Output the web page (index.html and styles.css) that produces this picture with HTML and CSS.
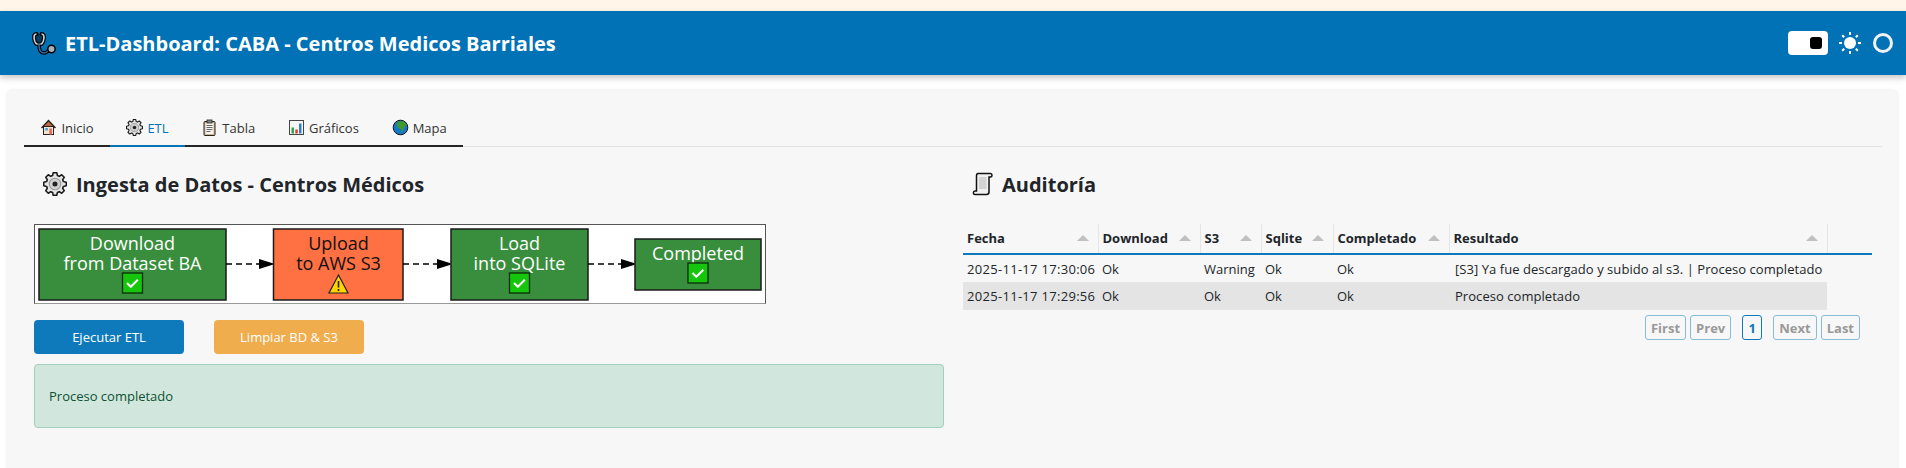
FILE: index.html
```html
<!DOCTYPE html>
<html lang="es">
<head>
<meta charset="utf-8">
<title>ETL-Dashboard</title>
<link rel="stylesheet" href="styles.css">
</head>
<body>
<svg class="defs" width="0" height="0" aria-hidden="true">
  <defs>
    <g id="gear">
      <path d="M7.990 2.980L8.510 .62H11.490L12.010 2.980 13.540 3.620 15.580 2.310 17.690 4.420 16.380 6.460 17.020 7.990 19.380 8.510V11.490L17.020 12.010 16.380 13.540 17.690 15.580 15.580 17.690 13.540 16.380 12.010 17.020 11.490 19.380H8.510L7.990 17.020 6.460 16.380 4.420 17.690 2.310 15.580 3.620 13.540 2.980 12.010 .62 11.490V8.510L2.980 7.990 3.620 6.460 2.310 4.420 4.420 2.310 6.460 3.620z" fill="#e6e6e6" stroke="#1a1a1a" stroke-width="1.300" stroke-linejoin="round"/>
      <circle cx="10" cy="10" r="4.800" fill="#d0d0d0" stroke="#9a9a9a" stroke-width="1"/>
      <circle cx="10" cy="10" r="2.100" fill="#222"/>
    </g>
    <g id="check">
      <rect x="-10" y="-10" width="20" height="20" fill="#16c60c" stroke="#0b2a0b" stroke-width="1.300"/>
      <path d="M-5.500 0l3.800 3.800 7-7" fill="none" stroke="#fff" stroke-width="2"/>
    </g>
  </defs>
</svg>

<div class="strip"></div>

<header class="topbar">
  <div class="brand">
    <svg class="brand-icon" viewBox="0 0 24 24" width="24" height="24">
      <path d="M4.500 3C2.300 3 1.800 5 2.100 7.500 2.500 11 4 13.500 7 13.500S11.500 11 11.900 7.500C12.200 5 11.700 3 9.500 3" fill="#0a3a5c" stroke="#000" stroke-width="4" stroke-linecap="round"/>
      <path d="M4.500 3C2.300 3 1.800 5 2.100 7.500 2.500 11 4 13.500 7 13.500S11.500 11 11.900 7.500C12.200 5 11.700 3 9.500 3" fill="none" stroke="#c4d6e4" stroke-width="1.600"/>
      <path d="M7 13.500c0 4.500 1.500 8.500 5 8.500s4.500-3 5.500-4" fill="none" stroke="#000" stroke-width="3.600"/>
      <path d="M7 13.500c0 4.500 1.500 8.500 5 8.500s4.500-3 5.500-4" fill="none" stroke="#2f6f9e" stroke-width="1.400"/>
      <circle cx="19.500" cy="18" r="3.700" fill="#a9b2b8" stroke="#000" stroke-width="1.500"/>
    </svg>
    <h1 class="brand-title">ETL-Dashboard: CABA - Centros Medicos Barriales</h1>
  </div>
  <div class="theme-tools">
    <span class="switch"><span class="switch-knob"></span></span>
    <svg class="sun" viewBox="0 0 24 24" width="24" height="24">
      <circle cx="12" cy="12" r="6" fill="#fff"/>
      <g stroke="#fff" stroke-width="2">
        <path d="M12 1v3M12 20v3M1 12h3M20 12h3M4.200 4.200l2 2M17.800 17.800l2 2M4.200 19.800l2-2M17.800 6.200l2-2"/>
      </g>
    </svg>
    <span class="ring"></span>
  </div>
</header>

<main class="card">
  <nav class="tabs">
    <a class="tab">
      <svg class="tab-icon" viewBox="0 0 17 17" width="17" height="17">
        <path d="M1.500 9L8.500 1.500 15.500 9" fill="#c0663f" stroke="#222" stroke-width="1.300"/>
        <rect x="3.500" y="7.500" width="10" height="8" fill="#f3e3cb" stroke="#222"/>
        <rect x="5.300" y="9" width="2.500" height="2.500" fill="#3ca0dc"/>
        <rect x="9.300" y="9.500" width="2.600" height="6" fill="#e36a5a"/>
      </svg>Inicio</a>
    <a class="tab tab-active">
      <svg class="tab-icon" viewBox="0 0 20 20" width="17" height="17"><use href="#gear"/></svg>ETL</a>
    <a class="tab">
      <svg class="tab-icon" viewBox="0 0 17 17" width="17" height="17">
        <rect x="3" y="2.500" width="11" height="14" rx="1" fill="#d9b48a" stroke="#222"/>
        <rect x="4.500" y="4" width="8" height="11" fill="#f4f4f4"/>
        <rect x="6" y="1" width="5" height="3" fill="#888" stroke="#222" stroke-width=".8"/>
        <path d="M5.500 6.500h6M5.500 8.500h6M5.500 10.500h6M5.500 12.500h4" stroke="#666"/>
      </svg>Tabla</a>
    <a class="tab">
      <svg class="tab-icon" viewBox="0 0 17 17" width="17" height="17">
        <rect x="1.500" y="1.500" width="14" height="14" fill="#f6f6f6" stroke="#444"/>
        <rect x="3.500" y="8.500" width="2.500" height="6" fill="#2aa84a"/>
        <rect x="7.300" y="10.500" width="2.500" height="4" fill="#e2402c"/>
        <rect x="11" y="4.500" width="2.500" height="10" fill="#2f7fd0"/>
      </svg>Gráficos</a>
    <a class="tab">
      <svg class="tab-icon" viewBox="0 0 17 17" width="17" height="17">
        <circle cx="8.500" cy="8.500" r="7.300" fill="#1479c9" stroke="#111"/>
        <path d="M5.500 2.500l6-.3 3.500 3.300-2 1.500-1.500 3.500-1.500 3.500-1-4-3-1-1-2.500z" fill="#3f9a2b"/>
      </svg>Mapa</a>
  </nav>

  <div class="columns">
    <section class="col-left">
      <h2 class="section-title section-title-left">
        <svg class="title-icon" viewBox="0 0 20 20" width="24" height="24"><use href="#gear"/></svg>
        Ingesta de Datos - Centros Médicos
      </h2>

      <svg class="flow" viewBox="1 1 730 78" width="732" height="80">
        <rect class="flow-box" x="5" y="5" width="187" height="71" fill="#388e3c"/>
        <text class="flow-text light" x="98.500" y="26">Download<tspan x="98.500" dy="20">from Dataset BA</tspan></text>
        <use href="#check" transform="translate(98.500 59)"/>

        <path class="flow-line" d="M192 40h36"/>
        <path d="M225 35l16 5-16 5z"/>

        <rect class="flow-box" x="239.500" y="5" width="129.500" height="71" fill="#ff7043"/>
        <text class="flow-text" x="304.500" y="26">Upload<tspan x="304.500" dy="20">to AWS S3</tspan></text>
        <path d="M304.500 51l9.500 18h-19z" fill="#ffd400" stroke="#222" stroke-width="1.200"/>
        <path d="M304.500 57v6.500M304.500 65v2" stroke="#222" stroke-width="1.600"/>

        <path class="flow-line" d="M369 40h36"/>
        <path d="M403 35l16 5-16 5z"/>

        <rect class="flow-box" x="417" y="5" width="137" height="71" fill="#388e3c"/>
        <text class="flow-text light" x="485.500" y="26">Load<tspan x="485.500" dy="20">into SQLite</tspan></text>
        <use href="#check" transform="translate(485.500 59)"/>

        <path class="flow-line" d="M554 40h35"/>
        <path d="M587 35l16 5-16 5z"/>

        <rect class="flow-box" x="601" y="15" width="126" height="51" fill="#388e3c"/>
        <text class="flow-text light" x="664" y="36">Completed</text>
        <use href="#check" transform="translate(664 49)"/>
      </svg>

      <div class="actions">
        <button class="btn btn-primary">Ejecutar ETL</button>
        <button class="btn btn-warning">Limpiar BD &amp; S3</button>
      </div>

      <div class="alert">Proceso completado</div>
    </section>

    <section class="col-right">
      <h2 class="section-title section-title-right">
        <svg class="title-icon" viewBox="0 0 21 24" width="21" height="24">
          <path d="M6 1.500h12.500c2 0 2 3.500 0 3.500H17V20c0 1.500-1 2.500-2.500 2.500H3C.8 22.500.8 19 3 19h1.500V4C4.500 2.500 5 1.500 6 1.500z" fill="#f0f0f0" stroke="#111" stroke-width="1.500"/>
          <path d="M7 6h7.500M7 8h7.500M7 10h7.500M7 12h7.500M7 14h7.500M7 16h7.500" stroke="#b5b5b5"/>
        </svg>
        Auditoría
      </h2>

      <table class="grid">
        <colgroup>
          <col class="c1"><col class="c2"><col class="c3"><col class="c4"><col class="c5"><col class="c6"><col class="c7">
        </colgroup>
        <thead>
          <tr>
            <th>Fecha<i></i></th>
            <th>Download<i></i></th>
            <th>S3<i></i></th>
            <th>Sqlite<i></i></th>
            <th>Completado<i></i></th>
            <th>Resultado<i></i></th>
            <th class="blank"></th>
          </tr>
        </thead>
        <tbody>
          <tr>
            <td class="date">2025-11-17 17:30:06</td><td>Ok</td><td>Warning</td><td>Ok</td><td>Ok</td>
            <td class="result">[S3] Ya fue descargado y subido al s3. | Proceso completado</td><td class="blank"></td>
          </tr>
          <tr class="odd">
            <td class="date">2025-11-17 17:29:56</td><td>Ok</td><td>Ok</td><td>Ok</td><td>Ok</td>
            <td class="result">Proceso completado</td><td class="blank"></td>
          </tr>
        </tbody>
      </table>

      <div class="pager">
        <span class="pg">First</span>
        <span class="pg">Prev</span>
        <span class="pg pg-current">1</span>
        <span class="pg">Next</span>
        <span class="pg">Last</span>
      </div>
    </section>
  </div>
</main>
</body>
</html>
```

FILE: styles.css
```css
* { box-sizing: border-box; }
html, body { margin: 0; padding: 0; }
body {
  width: 1906px;
  height: 468px;
  overflow: hidden;
  background: #fff;
  font-family: "Open Sans", "Noto Sans", sans-serif;
  font-size: 13px;
  color: #212529;
}
.defs { position: absolute; }

.strip { height: 11px; background: #fff5e8; }

.topbar {
  height: 64px;
  background: #0072b5;
  display: flex;
  align-items: center;
  justify-content: space-between;
  padding: 0 13px 0 32px;
  box-shadow: 0 3px 6px rgba(0, 0, 0, .22);
  position: relative;
}
.brand { display: flex; align-items: center; gap: 9px; }
.brand-icon { display: block; }
.brand-title {
  margin: 0;
  font-size: 20px;
  font-weight: 700;
  color: #fff;
}
.theme-tools { display: flex; align-items: center; }
.switch {
  width: 40px;
  height: 24px;
  background: #fff;
  border-radius: 4px;
  display: flex;
  align-items: center;
  justify-content: flex-end;
  padding-right: 6px;
}
.switch-knob { width: 12px; height: 12px; background: #000; border-radius: 3px; }
.sun { margin-left: 10px; }
.ring {
  width: 20px;
  height: 20px;
  border: 3px solid #f2f2f2;
  border-radius: 50%;
  margin-left: 11px;
}

.card {
  margin: 15px 8px 0 7px;
  height: 400px;
  background: #f7f7f7;
  border-radius: 6px;
  box-shadow: 0 0 3px rgba(0, 0, 0, .1);
  padding: 20px 0 0 17px;
}
.tabs {
  display: flex;
  width: 1858px;
  height: 37px;
  border-bottom: 1px solid #e2e2e2;
}
.tab {
  display: flex;
  align-items: center;
  height: 37px;
  padding: 0 16.400px;
  gap: 4px;
  border-bottom: 2px solid #252525;
  color: #333;
  font-size: 13px;
}
.tab-active { color: #0072b5; border-bottom-color: #0072b5; }
.tab-icon { display: block; }

.columns { display: flex; }
.col-left { width: 939px; padding: 19px 0 0 10px; }
.col-right { flex: 1; padding: 19px 0 0 0; }

.section-title {
  display: flex;
  align-items: center;
  gap: 9px;
  margin: 0;
  height: 36px;
  font-size: 20px;
  font-weight: 700;
  color: #212529;
}
.section-title-left { padding-left: 9px; }
.section-title-right { padding-left: 9px; }
.title-icon { display: block; }

.flow {
  display: block;
  margin-top: 22px;
  background: #fff;
  border: 1px solid #555;
  border-bottom-color: #999;
}
.flow-box { stroke: #1a1a1a; stroke-width: 1.500; }
.flow-text { font-size: 18px; text-anchor: middle; fill: #111; font-family: "Open Sans", sans-serif; }
.flow-text.light { fill: #fff; }
.flow-line { fill: none; stroke: #000; stroke-width: 1.300; stroke-dasharray: 6 4; }

.actions { display: flex; gap: 30px; margin-top: 16px; }
.btn {
  width: 150px;
  height: 34px;
  border: 0;
  border-radius: 4px;
  color: #fff;
  font: 13px "Open Sans", sans-serif;
  padding: 0;
}
.btn-primary { background: #0f7abb; }
.btn-warning { background: #f0ad4e; }

.alert {
  margin-top: 10px;
  width: 910px;
  height: 64px;
  background: #d1e7dd;
  border: 1px solid #a3cfbb;
  border-radius: 4px;
  color: #0f5132;
  font-size: 13px;
  display: flex;
  align-items: center;
  padding-left: 14px;
}

.grid {
  margin-top: 22px;
  border-collapse: collapse;
  table-layout: fixed;
  width: 909px;
  font-size: 13px;
}
.c1 { width: 135px; }
.c2 { width: 102px; }
.c3 { width: 61px; }
.c4 { width: 72px; }
.c5 { width: 116px; }
.c6 { width: 378px; }
.c7 { width: 45px; }
.grid th {
  position: relative;
  height: 30px;
  padding: 0 4px 1px;
  text-align: left;
  font-weight: 700;
  border-right: 1px solid #e5e5e5;
  border-bottom: 2px solid #0f7abb;
}
.grid th.blank { border-right: 0; }
.grid th i {
  position: absolute;
  right: 9px;
  top: 11px;
  border-left: 6px solid transparent;
  border-right: 6px solid transparent;
  border-bottom: 6px solid #c0c0c0;
}
.grid td {
  height: 28px;
  padding: 0 4px;
  white-space: nowrap;
  overflow: hidden;
}
.grid td.date { letter-spacing: .3px; }
.grid td.result { letter-spacing: .05px; padding-left: 6px; }
.odd td { background: #e4e4e4; }
.odd td.blank { background: transparent; }

.pager {
  display: flex;
  justify-content: flex-end;
  width: 897px;
  margin-top: 5px;
  gap: 4px;
}
.pg {
  height: 25px;
  padding: 0 5px;
  min-width: 38px;
  display: flex;
  align-items: center;
  justify-content: center;
  border: 1px solid #85bbdb;
  border-radius: 3px;
  color: #999;
  font-weight: 700;
  font-size: 13px;
}
.pg-current {
  min-width: 20px;
  margin: 0 7px;
  color: #0f7abb;
  border-color: #0f7abb;
}
```
